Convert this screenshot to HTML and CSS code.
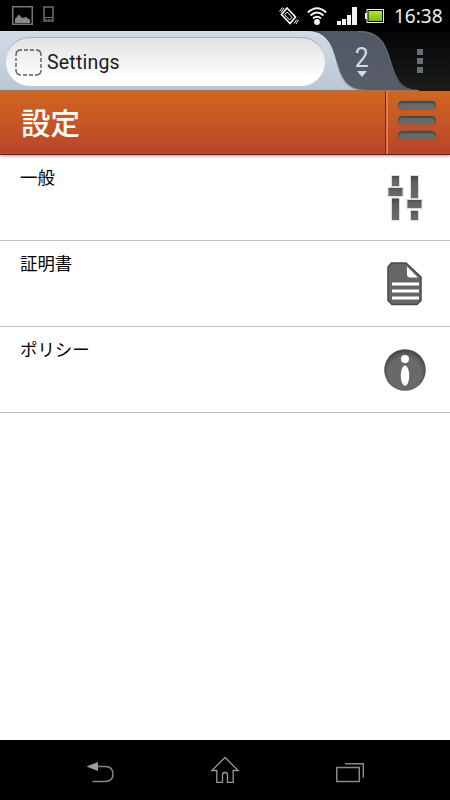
FILE: index.html
```html
<!DOCTYPE html>
<html lang="ja">

<head>
    <meta charset="UTF-8">
    <meta name="viewport" content="width=device-width, initial-scale=1.0">
    <title>Settings</title>
    <link rel="stylesheet" href="styles.css">
</head>

<body>
    <!-- shared gradients for the icons -->
    <svg class="defs" width="0" height="0">
        <defs>
            <linearGradient id="inset" x1="0" y1="0" x2="0" y2="1">
                <stop offset="0" stop-color="#454545"/>
                <stop offset="0.3" stop-color="#606060"/>
                <stop offset="1" stop-color="#6b6b6b"/>
            </linearGradient>
            <radialGradient id="disc" cx="0.5" cy="0.57" r="0.56">
                <stop offset="0.7" stop-color="#696969"/>
                <stop offset="1" stop-color="#444"/>
            </radialGradient>
            <linearGradient id="battery" x1="0" y1="0" x2="0" y2="1">
                <stop offset="0" stop-color="#b4e634"/>
                <stop offset="1" stop-color="#78bd06"/>
            </linearGradient>
            <linearGradient id="tab" x1="0" y1="0" x2="0" y2="1">
                <stop offset="0" stop-color="#505762"/>
                <stop offset="1" stop-color="#585f6a"/>
            </linearGradient>
            <linearGradient id="chrome" x1="0" y1="0" x2="0" y2="1">
                <stop offset="0" stop-color="#d0dbe6"/>
                <stop offset="1" stop-color="#bac7d3"/>
            </linearGradient>
        </defs>
    </svg>

    <div class="status-bar">
        <svg class="icon-picture" width="21" height="19" viewBox="0 0 21 19">
            <rect x="0.75" y="0.75" width="19.5" height="17.5" fill="none" stroke="#777" stroke-width="1.5"/>
            <path d="M3 17v-4l4-4.500 3 3.500 4-1 4 3v3z" fill="#888"/>
        </svg>
        <svg class="icon-phone" width="11" height="16" viewBox="0 0 11 16">
            <rect x="1" y="1" width="9" height="14" fill="none" stroke="#686868" stroke-width="1.6"/>
            <path d="M1 11.5h9" stroke="#686868"/>
            <path d="M2 13.5h7" stroke="#555" stroke-dasharray="2 1"/>
        </svg>
        <div class="status-right">
            <svg width="20" height="20" viewBox="0 0 20 20" fill="none" stroke="#f4f4f4">
                <path d="M8 2l8.500 9-5.500 6.500L2.500 8.500z" stroke-width="1.800" stroke-linejoin="round"/>
                <path d="M8 6l5 5.300-2.400 2.700-5-5.300z" stroke-width="1"/>
                <path d="M0.500 5.500l3-4M2 6.500l3-4.500M15 17.500l3-4M17 18l2.500-4" stroke-width="1"/>
            </svg>
            <svg class="icon-wifi" width="20" height="18" viewBox="0 0 20 18" fill="none" stroke="#f4f4f4" stroke-width="1.800">
                <path d="M0.800 5.500q9.200-8.500 18.400 0M3.500 8.500q6.500-6 13 0M6 11.500q4-3.500 8 0"/>
                <circle cx="10" cy="15" r="2.900" fill="#f4f4f4" stroke="none"/>
            </svg>
            <svg class="icon-signal" width="20" height="18" viewBox="0 0 20 18" fill="#f4f4f4">
                <path d="M0 14h4v4H0zM5 12h4v6H5zM10 8h4v10h-4zM15 0h5v18h-5z"/>
            </svg>
            <svg class="icon-battery" width="19" height="14" viewBox="0 0 19 14">
                <rect x="2" y="0.500" width="16.500" height="13" fill="#000" stroke="#eee"/>
                <rect x="0" y="4" width="2" height="6" fill="#eee"/>
                <rect x="3.500" y="2" width="13.500" height="10" fill="url(#battery)"/>
            </svg>
            <span class="clock">16:38</span>
        </div>
    </div>

    <div class="browser-bar">
        <svg class="tab-shape" width="450" height="60" viewBox="0 0 450 60">
            <path d="M290 0h70C403 0 379 60 419 60H290z" fill="url(#tab)"/>
            <path d="M358 0.500C403 0 379 59.500 419 59.500" fill="none" stroke="#747b85" stroke-width="0.800"/>
            <path d="M0 0h306C349 0 323 60 366 60H0z" fill="url(#chrome)"/>
            <path d="M0 0.500h306C349 0 323 59.500 366 59.500" fill="none" stroke="#dce6ef" stroke-width="0.600"/>
            <path d="M0 59.500h418" stroke="#7d8995"/>
        </svg>
        <div class="address">
            <svg width="27" height="27" viewBox="0 0 27 27" fill="none" stroke="#5a5a5a" stroke-width="1.400">
                <path d="M1 7V6q0-5 5-5h1M9 1h4M15 1h4M21 1q5 0 5 5v1M26 9v4M26 15v4M26 21q0 5-5 5h-1M18 26h-4M12 26H8M6 26q-5 0-5-5v-1M1 18v-4M1 12V9"/>
            </svg>
            <span>Settings</span>
        </div>
        <div class="tab-count">
            <span>2</span>
            <i class="arrow"></i>
        </div>
        <div class="more">
            <i></i>
            <i></i>
            <i></i>
        </div>
    </div>

    <div class="header">
        <h1>設定</h1>
        <div class="menu-btn">
            <i></i>
            <i></i>
            <i></i>
        </div>
    </div>

    <ul class="list">
        <li>
            <span>一般</span>
            <svg width="44" height="48" viewBox="0 0 44 48" fill="url(#inset)" stroke="#dedede" stroke-width="1">
                <rect x="7.500" y="1.500" width="8" height="11"/>
                <rect x="4" y="13.500" width="15" height="9"/>
                <rect x="7.500" y="24" width="8" height="22.500"/>
                <rect x="26.500" y="1.500" width="8" height="23"/>
                <rect x="23" y="25.500" width="15" height="9"/>
                <rect x="26.500" y="36.500" width="8" height="10"/>
            </svg>
        </li>
        <li>
            <span>証明書</span>
            <svg width="44" height="48" viewBox="0 0 44 48">
                <path d="M7.500 3H22l15 14v23.500l-4 4H8l-4-4V7z" fill="#666" stroke="#484848" stroke-width="1.500"/>
                <path d="M23 6.500v8q0 3 3 3h8z" fill="#fff"/>
                <path d="M8 24h27M8 31h27M8 38h27" stroke="#fff" stroke-width="3.200"/>
            </svg>
        </li>
        <li>
            <span>ポリシー</span>
            <svg width="44" height="48" viewBox="0 0 44 48">
                <circle cx="21" cy="24" r="20.800" fill="url(#disc)"/>
                <circle cx="21" cy="13" r="4" fill="#fff"/>
                <ellipse cx="21" cy="29.800" rx="4.200" ry="10.300" fill="#fff"/>
            </svg>
        </li>
    </ul>

    <div class="nav-bar">
        <svg width="30" height="30" viewBox="0 0 30 30">
            <path d="M11 11.500h9q8 0 8 7.500t-8 7.500H7.500" fill="none" stroke="#858585" stroke-width="1.500"/>
            <path d="M1.500 11.500L13 7v9z" fill="#a0a0a0"/>
        </svg>
        <svg width="30" height="30" viewBox="0 0 30 30" fill="none" stroke="#999" stroke-width="1.300">
            <path d="M15 2.500L1.800 15.500h5v11.800h5.700v-7q0-2.800 2.500-2.800t2.500 2.800v7h5.700V15.500h5z"/>
        </svg>
        <svg width="30" height="30" viewBox="0 0 30 30" fill="none" stroke="#8a8a8a" stroke-width="1.500">
            <path d="M1.800 12.500h22.500v14H1.800zM10 8.800h18.300v14"/>
        </svg>
    </div>
</body>

</html>
```

FILE: styles.css
```css
* {
    box-sizing: border-box;
}

body {
    margin: 0;
    height: 100vh;
    display: flex;
    flex-direction: column;
    background-color: #fff;
    color: #000;
    font-family: Roboto, "Noto Sans CJK JP", sans-serif;
    overflow: hidden;
}

svg {
    display: block;
    flex-shrink: 0;
}

.defs {
    position: absolute;
}

.status-bar {
    flex: none;
    display: flex;
    align-items: flex-start;
    height: 31px;
    padding: 6px 7px 0 12px;
    background-color: #000;
}

.icon-phone {
    margin-left: 10px;
}

.status-right {
    display: flex;
    align-items: center;
    height: 20px;
    margin-left: auto;
}

.icon-wifi {
    margin-left: 8px;
}

.icon-signal {
    margin-left: 10px;
}

.icon-battery {
    margin-left: 8px;
}

.clock {
    width: 49px;
    margin-left: 10px;
    color: #eee;
    font-family: "Noto Sans", sans-serif;
    font-size: 19px;
    line-height: 20px;
}

.browser-bar {
    position: relative;
    flex: none;
    display: flex;
    height: 60px;
    padding: 6px 0 6px 6px;
    background: linear-gradient(#050505, #1b1c1c);
}

.tab-shape {
    position: absolute;
    top: 0;
    left: 0;
}

.address {
    position: relative;
    display: flex;
    align-items: center;
    gap: 5px;
    width: 319px;
    height: 49px;
    padding-left: 9px;
    border-top: 1px solid #a8afb6;
    border-radius: 24px;
    background: linear-gradient(#e2e2e2, #fff 85%);
    color: #1c1c1c;
    font-size: 19.5px;
    letter-spacing: 0.2px;
}

.tab-count {
    position: relative;
    display: flex;
    flex-direction: column;
    align-items: center;
    width: 24px;
    margin-left: 25px;
    color: #d3dce6;
    font-size: 27.5px;
    line-height: 32px;
    padding-top: 5px;
}

.tab-count span {
    transform: scaleX(0.9);
}

.arrow {
    margin-top: -3px;
    border: 5px solid transparent;
    border-top: 6px solid #d3dce6;
    border-bottom: 0;
}

.more {
    position: relative;
    display: flex;
    flex-direction: column;
    gap: 3px;
    margin: 12px 0 0 43px;
}

.more i {
    width: 6px;
    height: 6px;
    background-color: #666d75;
}

.header {
    position: relative;
    z-index: 1;
    flex: none;
    display: flex;
    justify-content: space-between;
    height: 64px;
    padding-left: 21px;
    border-bottom: 1px solid #970c08;
    background: linear-gradient(#d0671f, #b9452b);
    box-shadow: 0 1px 3px rgba(0, 0, 0, 0.4);
}

.header h1 {
    margin: 0;
    color: #fff;
    font-size: 29.5px;
    font-weight: 500;
    line-height: 67px;
}

.menu-btn {
    display: flex;
    flex-direction: column;
    align-items: flex-start;
    gap: 6px;
    width: 65px;
    padding: 10px 0 0 12px;
    border-left: 1px solid #9c170b;
    box-shadow: inset 2px 0 #db7c55;
}

.menu-btn i {
    width: 38px;
    height: 9px;
    border-radius: 5px;
    background-color: #6c6a68;
    box-shadow: inset 0 2px 2px #484442, 0 0 1px #a34c1c;
}

.list {
    flex: 1;
    margin: 0;
    padding: 0;
    list-style: none;
}

.list li {
    display: flex;
    justify-content: space-between;
    height: 86px;
    padding: 18px 22px 0 20px;
    border-bottom: 1px solid #c3bfd0;
}

.list span {
    margin-top: -7px;
    font-size: 17.4px;
    line-height: 24px;
}

.list svg {
    margin-top: 1px;
}

.nav-bar {
    flex: none;
    display: flex;
    justify-content: space-between;
    height: 60px;
    padding: 15px 85px 0;
    background-color: #000;
}
```
